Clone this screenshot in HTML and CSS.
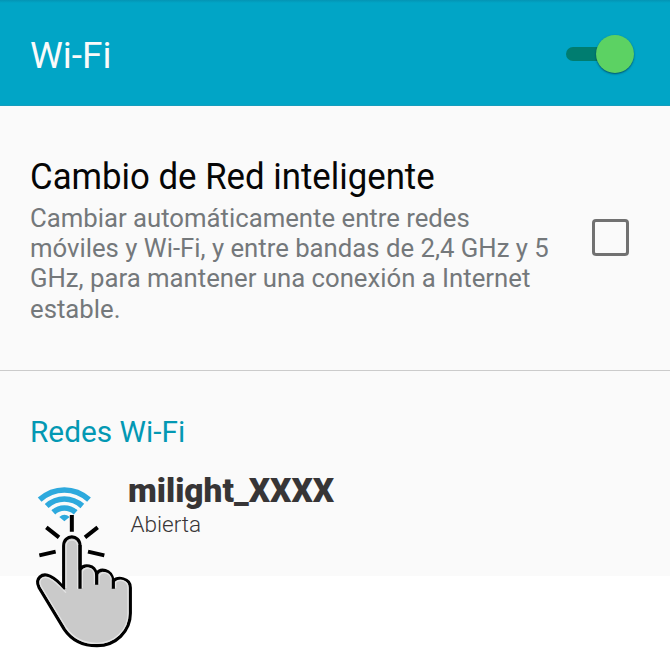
FILE: index.html
```html
<!DOCTYPE html>
<html lang="es">
<head>
<meta charset="utf-8">
<title>Wi-Fi</title>
<link rel="stylesheet" href="styles.css">
</head>
<body>
<main class="screen">
  <header class="bar">
    <h1 class="bar-title">Wi-Fi</h1>
    <div class="switch"><span class="track"></span><span class="thumb"></span></div>
  </header>
  <section class="option">
    <div class="option-text">
      <h2 class="option-title">Cambio de Red inteligente</h2>
      <p class="option-desc">Cambiar automáticamente entre redes<br>móviles y Wi-Fi, y entre bandas de 2,4 GHz y 5<br>GHz, para mantener una conexión a Internet<br>estable.</p>
    </div>
    <span class="checkbox"></span>
  </section>
  <section class="networks">
    <h3 class="networks-title">Redes Wi-Fi</h3>
    <div class="network">
      <div class="ssid">milight_XXXX</div>
      <div class="security">Abierta</div>
    </div>
    <svg class="tap" viewBox="0 0 390 534" width="130" height="178">
      <g fill="none" stroke="#2da9dd" stroke-width="17">
        <path d="M59 89Q92 60 133 60T207 89"/>
        <path d="M80 108Q103 87 133 87T187 108"/>
        <path d="M100 127Q114 114 133 114T167 127"/>
      </g>
      <path d="M118 141Q133 127 149 141L133 154Z" fill="#2da9dd"/>
      <g stroke="#000" stroke-width="12">
        <path d="M155.500 135V185M79 172L117 202M233 172L195 202M58 256L107 245M204 245L253 256"/>
      </g>
      <path d="M131 355V227C131 192 180 192 180 227V298C192 282 224 284 229 312C240 294 273 296 280 333C292 320 331 323 331 353V430C331 484 287 527 231 527C187 527 154 509 133 478L57 352C44 325 66 307 91 319C108 327 121 341 131 355Z" fill="#cacaca" stroke="#000" stroke-width="9.500" stroke-linejoin="round"/>
      <path d="M138 354V229C138 204 173 204 173 229V357M187 354V304C195 289 220 290 223 313V343M237 343V318C246 302 269 305 274 328V354M287 354V337C300 324 324 333 324 353V430C324 480 284 520 231 520C190 520 159 503 139 474L63 349C54 330 68 316 88 325C106 333 123 352 138 368" fill="none" stroke="#e4e4e4" stroke-width="4"/>
      <path d="M180 225V356M230 308V344M280 328V356" fill="none" stroke="#000" stroke-width="9.500"/>
    </svg>
  </section>
</main>
</body>
</html>
```
FILE: styles.css
```css
* { box-sizing: border-box; }
body { margin: 0; background: #fff; font-family: Roboto, "Liberation Sans", sans-serif; }
h1, h2, h3, p { margin: 0; font-weight: 400; white-space: nowrap; transform-origin: 0 0; }
.screen { width: 670px; height: 648px; overflow: hidden; }
.bar {
  height: 106px;
  padding: 3px 35px 0 30px;
  display: flex;
  align-items: center;
  justify-content: space-between;
  background: linear-gradient(#0494b4, #01a5c6 3px);
  border-bottom: 1px solid #159dbd;
}
.bar-title { padding-top: 3px; font-size: 37px; line-height: 44px; color: #fafafa; }
.switch { display: flex; align-items: center; }
.track { width: 50px; height: 14px; margin-right: -20px; border-radius: 7px; background: #007d70; }
.thumb {
  width: 38px;
  height: 38px;
  margin-right: 1px;
  border-radius: 50%;
  background: #5cd263;
  box-shadow: 0 1px 2px rgba(0, 45, 65, .7);
}
.option {
  height: 265px;
  padding: 49px 41px 0 30px;
  display: flex;
  justify-content: space-between;
  background: #fafafa;
  border-bottom: 1px solid #cbcbcb;
}
.option-title { font-size: 36px; line-height: 44px; color: #060606; transform: scaleX(.966); }
.option-desc { margin-top: 3.500px; font-size: 26px; line-height: 30.4px; color: #74787b; transform: scaleX(.989); }
.checkbox { width: 37px; height: 37px; margin-top: 64px; border: 3px solid #717171; border-radius: 4px; }
.networks { position: relative; height: 205px; padding: 43px 30px 0; background: #fafafa; }
.networks-title { font-size: 30px; line-height: 36px; color: #0398b3; transform: scaleX(.993); }
.network { margin: 22px 0 0 98px; color: #373536; }
.ssid { font-size: 33px; line-height: 38px; font-weight: 900; transform: scaleX(1.013); transform-origin: 0 0; }
.security { margin: 0 0 0 2.500px; font-size: 22.500px; line-height: 28px; font-weight: 300; }
.tap { position: absolute; left: 20px; top: 99px; overflow: visible; }
```
